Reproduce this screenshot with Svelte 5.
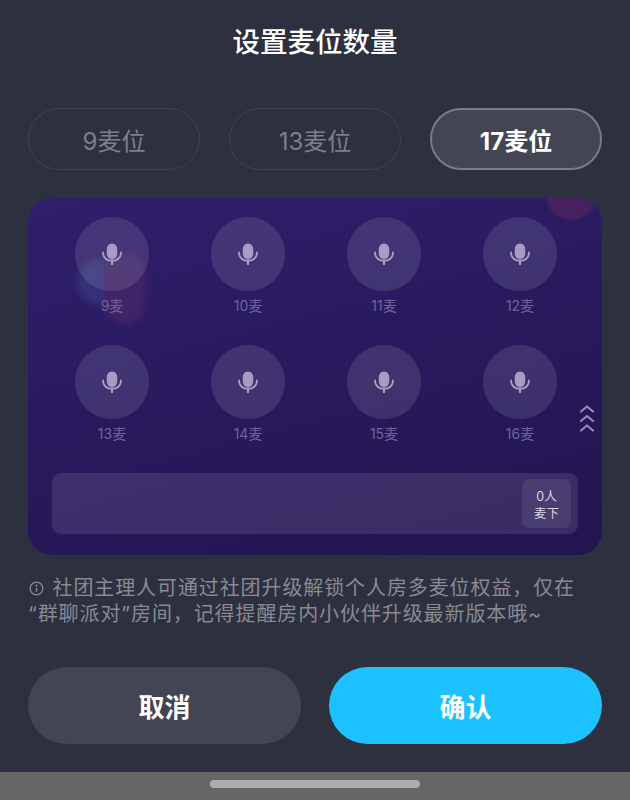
<script>
  const tabs = [
    { label: "9麦位", active: false },
    { label: "13麦位", active: false },
    { label: "17麦位", active: true },
  ];
  const seats = [9, 10, 11, 12, 13, 14, 15, 16];
</script>

<div class="page">
  <h1>设置麦位数量</h1>

  <div class="tabs">
    {#each tabs as tab}
      <div class="tab" class:active={tab.active}>{tab.label}</div>
    {/each}
  </div>

  <div class="panel">
    <div class="blob-top"></div>
    <div class="blob-blue"></div>
    <div class="blob-pink"></div>

    <div class="seats">
      {#each seats as n}
        <div class="seat">
          <div class="circle">
            <svg width="22" height="22" viewBox="0 0 22 22" fill="none">
              <rect x="5.800" y="0.500" width="10.400" height="15.500" rx="5.200" fill="#a89cc4" />
              <path d="M2 9.500c0 1.800.4 3.400 1.500 4.800 1.700 2.200 4.500 3.400 7.500 3.400s5.800-1.200 7.500-3.400c1.100-1.400 1.500-3 1.500-4.800" stroke="#a89cc4" stroke-width="1.900" stroke-linecap="round" />
              <path d="M11 17.500v3.500" stroke="#a89cc4" stroke-width="2.200" stroke-linecap="round" />
            </svg>
          </div>
          <span>{n}麦</span>
        </div>
      {/each}
    </div>

    <svg class="chevrons" width="16" height="29" viewBox="0 0 16 29" fill="none">
      <path d="M2 7.500 8 2.500l6 5M2 17 8 12l6 5M2 26.500 8 21.500l6 5" stroke="#968cb2" stroke-width="2.200" stroke-linecap="round" stroke-linejoin="round" />
    </svg>

    <div class="below">
      <div class="below-count">0人<br />麦下</div>
    </div>
  </div>

  <p class="note">
    <svg class="info" width="15" height="15" viewBox="0 0 15 15" fill="none">
      <circle cx="7.500" cy="7.500" r="6.300" stroke="#898a93" stroke-width="1.300" />
      <path d="M7.500 6.700v4" stroke="#898a93" stroke-width="1.400" />
      <circle cx="7.500" cy="4.500" r="0.900" fill="#898a93" />
    </svg>
    社团主理人可通过社团升级解锁个人房多麦位权益，仅在<br />“群聊派对”房间，记得提醒房内小伙伴升级最新版本哦~
  </p>

  <div class="actions">
    <div class="btn cancel">取消</div>
    <div class="btn confirm">确认</div>
  </div>

  <div class="home-bar"><div class="handle"></div></div>
</div>

<style>
  :global(body) {
    margin: 0;
    background: #2d303f;
  }
  .page {
    width: 630px;
    height: 800px;
    background: #2d303f;
    display: flex;
    flex-direction: column;
    font-family: "Inter", "Noto Sans CJK SC", sans-serif;
    overflow: hidden;
  }
  h1 {
    margin: 0;
    padding-top: 22px;
    height: 108px;
    flex: none;
    box-sizing: border-box;
    text-align: center;
    font-size: 27.500px;
    line-height: 40px;
    font-weight: 500;
    color: #fff;
  }
  .tabs {
    display: grid;
    grid-template-columns: repeat(3, 172px);
    column-gap: 29px;
    padding: 0 28px;
  }
  .tab {
    height: 62px;
    box-sizing: border-box;
    border: 1.500px solid #3f4250;
    border-radius: 31px;
    display: flex;
    align-items: center;
    justify-content: center;
    font-size: 24px;
    color: #7d7f8a;
  }
  .tab.active {
    background: #434552;
    border: 2px solid #797b86;
    color: #fff;
    font-weight: 700;
  }
  .panel {
    position: relative;
    flex: none;
    margin: 28px 28px 0;
    height: 357px;
    border-radius: 24px;
    overflow: hidden;
    background: linear-gradient(165deg, #2f1f6c 0%, #291a5f 45%, #231550 100%);
  }
  .blob-top {
    position: absolute;
    left: 518px;
    top: -26px;
    width: 50px;
    height: 48px;
    border-radius: 50%;
    background: #47215f;
    filter: blur(1px);
  }
  .blob-blue {
    position: absolute;
    left: 49px;
    top: 62px;
    width: 50px;
    height: 44px;
    border-radius: 22px;
    background: #35327a;
    filter: blur(3px);
  }
  .blob-pink {
    position: absolute;
    left: 76px;
    top: 54px;
    width: 42px;
    height: 72px;
    border-radius: 21px;
    background: #3f2468;
    filter: blur(3px);
  }
  .seats {
    position: relative;
    display: grid;
    grid-template-columns: repeat(4, 74px);
    column-gap: 62px;
    padding: 19px 0 0 47px;
  }
  .seat {
    height: 128px;
    display: flex;
    flex-direction: column;
    align-items: center;
  }
  .circle {
    width: 74px;
    height: 74px;
    border-radius: 50%;
    background: rgba(255, 255, 255, 0.11);
    display: flex;
    align-items: center;
    justify-content: center;
  }
  .seat span {
    margin-top: 6px;
    font-size: 14px;
    line-height: 18px;
    color: #6d6395;
  }
  .chevrons {
    position: absolute;
    left: 551px;
    top: 206px;
  }
  .below {
    position: absolute;
    left: 24px;
    right: 24px;
    top: 275px;
    height: 61px;
    border-radius: 9px;
    background: rgba(255, 255, 255, 0.1);
    display: flex;
    align-items: center;
    justify-content: flex-end;
    padding-right: 7px;
  }
  .below-count {
    width: 49px;
    height: 49px;
    border-radius: 7px;
    background: rgba(255, 255, 255, 0.08);
    text-align: center;
    font-size: 12.500px;
    line-height: 17px;
    padding-top: 9px;
    box-sizing: border-box;
    color: #d9d5e2;
  }
  .note {
    margin: 20px 28px 0;
    height: 66px;
    flex: none;
    font-size: 20px;
    line-height: 26px;
    color: #898a93;
    letter-spacing: 0.900px;
    white-space: nowrap;
  }
  .info {
    vertical-align: -1px;
    margin: 0 2px 0 1px;
  }
  .actions {
    display: flex;
    flex: none;
    gap: 28px;
    padding: 26px 28px 0;
  }
  .btn {
    flex: 1;
    height: 77px;
    border-radius: 38.500px;
    display: flex;
    align-items: center;
    justify-content: center;
    font-size: 26px;
    font-weight: 700;
    color: #fff;
  }
  .cancel {
    background: #434552;
  }
  .confirm {
    background: #1cc1ff;
  }
  .home-bar {
    margin-top: 28px;
    height: 28px;
    flex: none;
    background: #666666;
    display: flex;
    justify-content: center;
    padding-top: 8px;
    box-sizing: border-box;
  }
  .handle {
    width: 210px;
    height: 8px;
    border-radius: 4px;
    background: #acacac;
  }
</style>
